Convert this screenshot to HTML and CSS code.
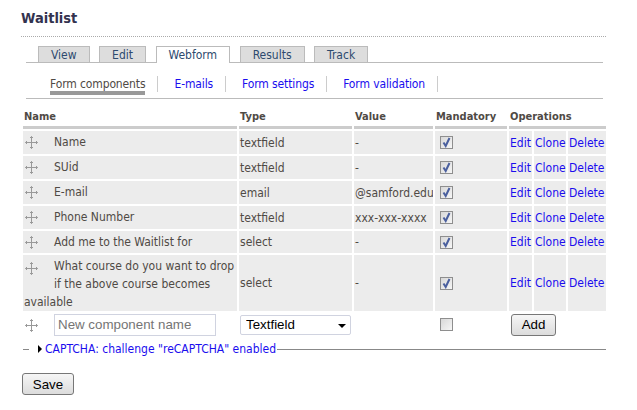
FILE: index.html
```html
<!DOCTYPE html>
<html lang="en">
<head>
    <meta charset="UTF-8">
    <meta name="viewport" content="width=device-width, initial-scale=1.0">
    <title>Waitlist</title>
    <link rel="stylesheet" href="styles.css">
</head>
<body>
    <svg class="sprites" width="0" height="0">
        <symbol id="drag" viewBox="0 0 13 13">
            <path d="M6.5 0.5v12M0.5 6.5h12M5 2l1.5-1.5L8 2M5 11l1.5 1.5L8 11M2 5L0.5 6.5 2 8M11 5l1.5 1.5L11 8" fill="none" stroke="#999" stroke-width="1"/>
        </symbol>
        <symbol id="tick" viewBox="0 0 11 11">
            <path d="M2.5 5.5l2.2 3.5L8.5 1" fill="none" stroke="#4a5f9e" stroke-width="2"/>
        </symbol>
    </svg>
    <div class="container">
        <h1>Waitlist</h1>
        <ul class="tabs">
            <li><a href="#">View</a></li>
            <li><a href="#">Edit</a></li>
            <li class="active"><a href="#">Webform</a></li>
            <li><a href="#">Results</a></li>
            <li><a href="#">Track</a></li>
        </ul>
        <ul class="subtabs">
            <li class="active"><a href="#">Form components</a></li>
            <li><a href="#">E-mails</a></li>
            <li><a href="#">Form settings</a></li>
            <li><a href="#">Form validation</a></li>
        </ul>
        <form>
            <table class="components">
                <colgroup>
                    <col class="col-name"><col class="col-type"><col class="col-value"><col class="col-mandatory">
                    <col class="col-edit"><col class="col-clone"><col class="col-delete">
                </colgroup>
                <thead>
                    <tr>
                        <th>Name</th>
                        <th>Type</th>
                        <th>Value</th>
                        <th>Mandatory</th>
                        <th colspan="3">Operations</th>
                    </tr>
                </thead>
                <tbody>
                    <tr>
                        <td class="name"><svg class="drag"><use href="#drag"/></svg>Name</td>
                        <td>textfield</td>
                        <td>-</td>
                        <td><span class="check"><svg><use href="#tick"/></svg></span></td>
                        <td><a href="#">Edit</a></td>
                        <td><a href="#">Clone</a></td>
                        <td><a href="#">Delete</a></td>
                    </tr>
                    <tr>
                        <td class="name"><svg class="drag"><use href="#drag"/></svg>SUid</td>
                        <td>textfield</td>
                        <td>-</td>
                        <td><span class="check"><svg><use href="#tick"/></svg></span></td>
                        <td><a href="#">Edit</a></td>
                        <td><a href="#">Clone</a></td>
                        <td><a href="#">Delete</a></td>
                    </tr>
                    <tr>
                        <td class="name"><svg class="drag"><use href="#drag"/></svg>E-mail</td>
                        <td>email</td>
                        <td>@samford.edu</td>
                        <td><span class="check"><svg><use href="#tick"/></svg></span></td>
                        <td><a href="#">Edit</a></td>
                        <td><a href="#">Clone</a></td>
                        <td><a href="#">Delete</a></td>
                    </tr>
                    <tr>
                        <td class="name"><svg class="drag"><use href="#drag"/></svg>Phone Number</td>
                        <td>textfield</td>
                        <td>xxx-xxx-xxxx</td>
                        <td><span class="check"><svg><use href="#tick"/></svg></span></td>
                        <td><a href="#">Edit</a></td>
                        <td><a href="#">Clone</a></td>
                        <td><a href="#">Delete</a></td>
                    </tr>
                    <tr class="short">
                        <td class="name"><svg class="drag"><use href="#drag"/></svg>Add me to the Waitlist for</td>
                        <td>select</td>
                        <td>-</td>
                        <td><span class="check"><svg><use href="#tick"/></svg></span></td>
                        <td><a href="#">Edit</a></td>
                        <td><a href="#">Clone</a></td>
                        <td><a href="#">Delete</a></td>
                    </tr>
                    <tr class="tall">
                        <td class="name"><svg class="drag"><use href="#drag"/></svg>What course do you want to drop if the above course becomes available</td>
                        <td>select</td>
                        <td>-</td>
                        <td><span class="check"><svg><use href="#tick"/></svg></span></td>
                        <td><a href="#">Edit</a></td>
                        <td><a href="#">Clone</a></td>
                        <td><a href="#">Delete</a></td>
                    </tr>
                    <tr class="new-row">
                        <td><svg class="drag"><use href="#drag"/></svg><input type="text" class="new-name" placeholder="New component name"></td>
                        <td><span class="select-wrap"><select><option>Textfield</option></select></span></td>
                        <td></td>
                        <td><span class="check"></span></td>
                        <td colspan="3"><button type="button" class="btn btn-add">Add</button></td>
                    </tr>
                </tbody>
            </table>
            <fieldset class="captcha">
                <legend><span class="arrow"></span><a href="#">CAPTCHA: challenge "reCAPTCHA" enabled</a></legend>
            </fieldset>
            <button type="submit" class="btn btn-save">Save</button>
        </form>
    </div>
</body>
</html>
```

FILE: styles.css
```css
body {
    font-family: "DejaVu Sans Condensed", "DejaVu Sans", sans-serif;
    font-stretch: condensed;
    font-size: 12px;
    margin: 0;
    background-color: #fff;
    color: #4f4a45;
}
a {
    text-decoration: none;
    color: #1a0dee;
}
.sprites {
    display: block;
    height: 0;
}
.container {
    width: 585px;
    padding: 10px 0 0 21px;
}
h1 {
    margin: 0;
    padding-bottom: 10px;
    font-size: 14.5px;
    line-height: 16px;
    color: #33334f;
    border-bottom: 1px dotted #aaa;
}
.tabs {
    display: flex;
    gap: 9.5px;
    list-style: none;
    margin: 9px 3px 0 5px;
    padding: 0 0 0 12px;
    height: 16px;
    border-bottom: 1px solid #bbb;
}
.tabs a {
    display: block;
    height: 16px;
    padding: 0 12px;
    line-height: 17px;
    font-size: 12px;
    color: #2d4a6e;
    background-color: #ddd;
    border: 1px solid #bbb;
    border-bottom: none;
    box-sizing: border-box;
}
.tabs .active a {
    height: 17px;
    background-color: #fff;
}
.subtabs {
    display: flex;
    list-style: none;
    margin: 0 3px 0 5px;
    padding: 13px 0 6px 24px;
    border-bottom: 1px solid #bbb;
    letter-spacing: -0.12px;
}
.subtabs li {
    padding-right: 12px;
    margin-right: 16px;
    border-right: 1px solid #ccc;
    line-height: 16px;
    height: 16px;
}
.subtabs .active a {
    color: #4f4a45;
    display: block;
    height: 15px;
    border-bottom: 4px solid #999;
}
.components {
    table-layout: fixed;
    border-collapse: separate;
    border-spacing: 2px;
    width: 587px;
    margin: 5px 0 0 0;
}
.col-name { width: 214px; }
.col-type { width: 113px; }
.col-value { width: 79px; }
.col-mandatory { width: 72px; }
.col-edit { width: 23px; }
.col-clone { width: 32px; }
.col-delete { width: 38px; }
.components th {
    text-align: left;
    font-size: 11px;
    font-weight: bold;
    padding: 0 1px;
    height: 20px;
    border-bottom: 3px solid #ccc;
}
.components td {
    background-color: #ececec;
    height: 23px;
    padding: 0 1px;
    line-height: 18px;
    white-space: nowrap;
    overflow: hidden;
}
.components .short td {
    height: 22px;
}
.components td.name {
    vertical-align: top;
    padding-top: 2px;
    height: 21px;
}
.components .short td.name {
    height: 20px;
}
.components .tall td {
    white-space: normal;
}
.components .new-row td {
    background-color: transparent;
    overflow: visible;
}
.drag {
    float: left;
    width: 13px;
    height: 13px;
    margin: 3px 16px 0 1px;
}
.tall .drag {
    margin-top: 5px;
    margin-bottom: 10px;
}
.new-row .drag {
    margin-top: 5px;
}
.check {
    display: block;
    width: 11px;
    height: 11px;
    margin-left: 4px;
    border: 1px solid #8e8e8e;
    background: linear-gradient(135deg, #d8d8d8, #f6f6f6);
}
.check svg {
    display: block;
    width: 11px;
    height: 11px;
}
.new-name {
    width: 162px;
    height: 22px;
    padding: 0 3px;
    box-sizing: border-box;
    border: 1px solid #d0d3e0;
    font-family: "Liberation Sans", Arial, sans-serif;
    font-size: 13.33px;
}
.select-wrap {
    display: block;
    position: relative;
    width: 111px;
}
.select-wrap::after {
    content: "";
    position: absolute;
    right: 5px;
    top: 9px;
    border: 4px solid transparent;
    border-top-color: #000;
    border-bottom: none;
}
select {
    display: block;
    appearance: none;
    width: 111px;
    height: 20px;
    padding: 0 5px;
    background-color: #fff;
    border: 1px solid #d0d3e0;
    border-radius: 2px;
    font-family: "Liberation Sans", Arial, sans-serif;
    font-size: 13.33px;
    color: #000;
}
.btn {
    display: block;
    font-family: "Liberation Sans", Arial, sans-serif;
    font-size: 13.33px;
    color: #000;
    border: 1px solid #777;
    border-radius: 3px;
    background: linear-gradient(#f6f6f6, #dcdcdc);
    padding: 0;
    height: 22px;
}
.btn-add {
    width: 45px;
    margin-left: 1px;
}
.btn-save {
    width: 52px;
    margin: 16px 0 0 1px;
}
.captcha {
    margin: 3px 0 0 2px;
    padding: 0;
    width: 583px;
    height: 11px;
    border: none;
    border-top: 1px solid #888;
}
.captcha legend {
    margin-left: 6px;
    padding: 0 1px 0 9px;
    line-height: 16px;
}
.arrow {
    display: inline-block;
    margin-right: 3px;
    border: 4px solid transparent;
    border-left-color: #000;
    border-right: none;
}
```
